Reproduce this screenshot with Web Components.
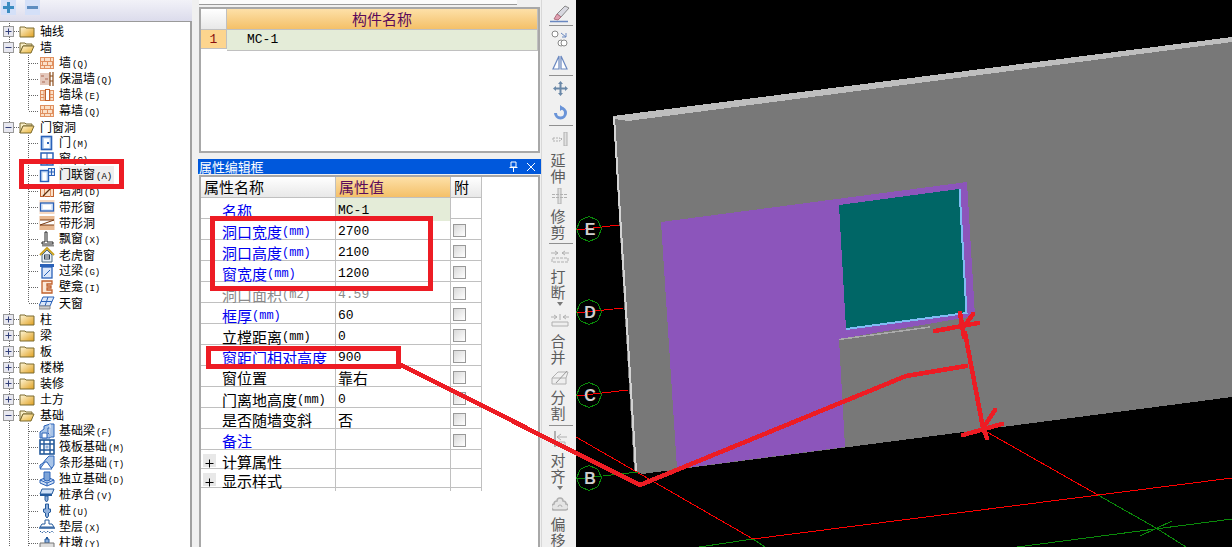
<!DOCTYPE html>
<html lang="zh"><head><meta charset="utf-8"><title>CAD</title>
<style>
html,body{margin:0;padding:0;width:1232px;height:547px;overflow:hidden;background:#f0f0f0}
</style></head><body>
<cad-app></cad-app>
<script>
const CJK='"Noto Sans CJK SC","Noto Sans",sans-serif';
const MONO='"Liberation Mono",monospace';
const B='#2a62b8',BL='#bcd4f4',O='#e09060',OL='#fbe0c8';
const brick=`<rect x="1.500" y="2.500" width="13" height="11" fill="${OL}" stroke="${O}"/><path d="M1 6.500h14M1 10.500h14M5.500 2v4M11.500 2v4M3.500 6v4M8.500 6v4M13.500 6v4M5.500 10v4M11.500 10v4" stroke="${O}" fill="none"/>`;
const ICONS={
brick,
insul:`<rect x="1" y="2" width="10" height="12" fill="#e4c8bc"/><path d="M2 4h3v2H2zM6 7h3v2H6zM3 10h3v2H3z" fill="#c89888"/><path d="M11 1v14M14 1v14M11 5h3M11 10h3" stroke="#8a4a18" fill="none" stroke-width="1.2"/>`,
pier:`<rect x="1.500" y="3.500" width="13" height="10" fill="${OL}" stroke="${O}"/><path d="M5 3v11M11 3v11M1 7.500h4M11 7.500h4M1 10.500h4M11 10.500h4" stroke="${O}"/><rect x="6.500" y="2.500" width="4" height="11" fill="#fff" stroke="#c0602c"/>`,
door:`<rect x="2.500" y="1.500" width="10" height="13" fill="${BL}" stroke="${B}" stroke-width="1.6"/><rect x="5" y="3.500" width="5.500" height="9.500" fill="#fff"/><rect x="8" y="7" width="2" height="2" fill="${B}"/>`,
win:`<rect x="2" y="2" width="12" height="12" fill="#fff" stroke="${B}" stroke-width="1.500"/><path d="M8 2v12M2 8h12" stroke="${B}"/>`,
doorwin:`<rect x="1.500" y="3.500" width="8" height="11" fill="${BL}" stroke="${B}" stroke-width="1.400"/><rect x="3.500" y="5.500" width="4" height="8" fill="#fff"/><rect x="9.500" y="1.500" width="6" height="7" fill="#dce8fa" stroke="${B}"/><path d="M12.500 1.500v7M9.500 5h6" stroke="${B}"/>`,
hole:`<rect x="1.500" y="2.500" width="13" height="11" fill="${OL}" stroke="#c0602c"/><path d="M5.500 2v12M11.500 2v12" stroke="${O}"/><path d="M4 13L13 4" stroke="#5a3010" stroke-width="1.300"/>`,
stripwin:`<rect x="0.500" y="1" width="15" height="14" fill="#f6d8c0"/><rect x="1.500" y="4" width="13" height="8" fill="#dce8fa" stroke="${B}" stroke-width="1.300"/><rect x="4" y="6" width="8" height="4" fill="#fff"/>`,
striphole:`<rect x="0.500" y="1" width="15" height="14" fill="#e8b890"/><rect x="1" y="5" width="14" height="5" fill="#fff"/><path d="M1 10L15 5M1 5h14M1 10h14" stroke="#7a3a10" fill="none"/>`,
bay:`<path d="M6 1h2v10h6v2H3v-2h3z" fill="#fff" stroke="#222"/><path d="M3 14.500h12" stroke="#888" stroke-width="2"/>`,
dormer:`<path d="M1 8L8 1l7 7" fill="none" stroke="#c8a020" stroke-width="2"/><path d="M3 8v7h10V8L8 3z" fill="#e8f0f8" stroke="#4a6a80"/><rect x="5.500" y="8" width="5" height="4" fill="#fff" stroke="#345"/><path d="M5.500 10h5" stroke="#345"/>`,
lintel:`<rect x="1" y="1" width="14" height="3" fill="${B}"/><rect x="3" y="4" width="10" height="11" fill="#dce8fa" stroke="${B}" stroke-width="1.300"/><path d="M5 13L11 7" stroke="${B}"/>`,
niche:`<path d="M3 2h10v3H8v2h4v2H8v2h5v3H3z" fill="#fbe8d8" stroke="#c0602c" stroke-width="1.300"/>`,
skylight:`<path d="M4 2h11l-4 9H0z" fill="#dce8fa" stroke="${B}"/><path d="M9 2L6 11M2 6.500h11" stroke="${B}"/><path d="M0 11h11v3H0z" fill="#ccc" stroke="#888"/>`,
beam:`<path d="M1 15V9l4-3v-3l6-2h4v13h-4V5H9v5l2 2v3z" fill="#a8c4e8" stroke="${B}"/><path d="M11 1v13" stroke="#fff"/><path d="M3 15V10h5v5z" fill="#fff" stroke="${B}"/>`,
raft:`<rect x="1" y="1" width="14" height="14" fill="#fff" stroke="#245a9c" stroke-width="1.600"/><path d="M1 5h14M1 11h14M5 1v14M11 1v14" stroke="#245a9c" stroke-width="1.400"/><rect x="6.500" y="6.500" width="3" height="3" fill="#8fb0dc"/>`,
stripf:`<path d="M1 13V10l3-2 3-4 3-3h5v9l-2 3z" fill="#a8c4e8" stroke="${B}"/><path d="M1 14h12l-3-4-2-3H6L3 11z" fill="#fff" stroke="${B}"/>`,
iso:`<path d="M1 9l7-3 7 3v3l-7 3-7-3z" fill="#cfe0f6" stroke="${B}"/><path d="M5 1h6v8l-3 1-3-1z" fill="#7ea4d8" stroke="${B}"/><path d="M1 9l7 3 7-3M8 12v3" stroke="${B}" fill="none"/>`,
cap:`<path d="M3 2h12l-2 5H1z" fill="#cfe0f6" stroke="#245a9c"/><path d="M1 7h12v2H1z" fill="#245a9c"/><path d="M6 9h3v4l-1.500 2L6 13z" fill="#8fb0dc" stroke="#245a9c"/>`,
pile:`<path d="M6.500 1h3v5h2v3l-2 1v3l-1.500 2L6.500 13v-3l-2-1V6h2z" fill="#8fb0dc" stroke="#245a9c"/>`,
cushion:`<path d="M6 1h4v4h3l2 3H1l2-3h3z" fill="#fff" stroke="#245a9c"/><path d="M0 9h16" stroke="#245a9c" stroke-width="1.500"/><path d="M1 12l2 2 2-2 2 2 2-2 2 2 2-2 2 2" stroke="#245a9c" fill="none" stroke-dasharray="1.500 1"/>`,
pierf:`<path d="M6 4h4v4H6z" fill="#8fb0dc" stroke="#245a9c"/><path d="M7 2h2v2H7z" fill="#245a9c"/><path d="M1 8h14v7H1z" fill="#ddd" stroke="#777"/>`
};

function def(name,cls){customElements.define(name,cls)}
class Base extends HTMLElement{
  render(html){this.attachShadow({mode:'open'}).innerHTML=html}
}

/* ---- tree ---- */
def('tree-row',class extends Base{connectedCallback(){ if(this.shadowRoot)return;
  const a=n=>this.getAttribute(n);const kind=a('kind');
  const dots='stroke="#666" stroke-dasharray="1 1" fill="none"';
  let pre,ic;
  if(kind==='leaf'){
    const last=this.hasAttribute('last');
    pre=`<svg width="39" height="16"><path d="M9.500 0v16" ${dots}/><path d="M28.500 0v${last?8:16}" ${dots}/><path d="M29 8.500h9" ${dots}/></svg>`;
    ic=`<svg class="ic" width="16" height="16" viewBox="0 0 16 16">${ICONS[a('icon')]}</svg>`;
  }else{
    const open=kind==='open';
    pre=`<svg width="19" height="16"><path d="M9.500 0v16" ${dots}/><path d="M14 8.500h5" ${dots}/><rect x="3.500" y="3.500" width="10" height="10" fill="#e8e8f0" stroke="#999"/><path d="M5.500 8.500h6${open?'':'M8.500 5.500v6'}" stroke="#33407a" fill="none"/></svg>`;
    ic=open
     ?`<svg class="fo" width="16" height="16" viewBox="0 0 16 16"><path d="M1 4h5l1 1h6v2H4L1 14z" fill="#f8eec8" stroke="#7a6a30"/><path d="M4 7h11l-3 7H1z" fill="url(#g)" stroke="#7a6a30"/><defs><linearGradient id="g" x1="0" y1="0" x2="1" y2="1"><stop offset="0" stop-color="#fff6d8"/><stop offset="1" stop-color="#e8b030"/></linearGradient></defs></svg>`
     :`<svg class="fo" width="16" height="16" viewBox="0 0 16 16"><path d="M1 4h5l1 1h8v9H1z" fill="url(#g)" stroke="#7a6a30"/><defs><linearGradient id="g" x1="0" y1="0" x2="1" y2="1"><stop offset="0" stop-color="#fff8dc"/><stop offset="1" stop-color="#e0a020"/></linearGradient></defs></svg>`;
  }
  const sel=this.hasAttribute('selected');
  const sfx=a('sfx');
  this.render(`<style>
   :host{display:flex;height:16px;align-items:center;font:12px/16px ${CJK};color:#000;white-space:nowrap}
   svg{display:block;flex:none}
   .fo{margin-right:5px}
   .ic{margin-right:4px}
   .t{padding-right:2px;${sel?'background:#eee;':''}}
   .s{font:9px/16px ${MONO};margin-left:1px}
  </style>${pre}${ic}<span class="t">${a('label')}${sfx?`<span class="s">(${sfx})</span>`:''}</span>`);
}});
const TREE=[
['closed','轴线'],['open','墙'],
['leaf','墙','brick','Q'],['leaf','保温墙','insul','Q'],['leaf','墙垛','pier','E'],['leaf','幕墙','brick','Q',1],
['open','门窗洞'],
['leaf','门','door','M'],['leaf','窗','win','C'],['leaf','门联窗','doorwin','A',0,1],['leaf','墙洞','hole','D'],['leaf','带形窗','stripwin'],['leaf','带形洞','striphole'],['leaf','飘窗','bay','X'],['leaf','老虎窗','dormer'],['leaf','过梁','lintel','G'],['leaf','壁龛','niche','I'],['leaf','天窗','skylight','',1],
['closed','柱'],['closed','梁'],['closed','板'],['closed','楼梯'],['closed','装修'],['closed','土方'],['open','基础'],
['leaf','基础梁','beam','F'],['leaf','筏板基础','raft','M'],['leaf','条形基础','stripf','T'],['leaf','独立基础','iso','D'],['leaf','桩承台','cap','V'],['leaf','桩','pile','U'],['leaf','垫层','cushion','X'],['leaf','柱墩','pierf','Y']
];
def('tree-panel',class extends Base{connectedCallback(){ if(this.shadowRoot)return;
  const rows=TREE.map(r=>`<tree-row kind="${r[0]}" label="${r[1]}"${r[2]?` icon="${r[2]}"`:''}${r[3]?` sfx="${r[3]}"`:''}${r[4]?' last':''}${r[5]?' selected':''}></tree-row>`).join('');
  this.render(`<style>
   :host{display:flex;flex-direction:column;width:192px;height:547px;overflow:hidden;flex:none}
   .bar{height:21px;flex:none;box-sizing:border-box;background:linear-gradient(#f2f2f8,#dcdcec);display:flex;gap:9px;padding-left:1px}
   .b{width:15px;height:15px;background:#d4e0f8;border:0 solid #bcc8ee;box-sizing:border-box;display:flex;align-items:center;justify-content:center}
   .tree{flex:1;background:#fff;border-top:1px solid #9a9a9a;border-right:2px solid #a0a0a0;padding-top:1px;overflow:hidden}
  </style><div class="bar">
   <div class="b"><svg width="11" height="11"><path d="M0 5.500h11M5.500 0v11" stroke="#3c8cc0" stroke-width="3"/></svg></div>
   <div class="b"><svg width="11" height="5"><path d="M0 2.500h11" stroke="#5c8cc0" stroke-width="3"/></svg></div>
  </div><div class="tree">${rows}</div>`);
}});

/* ---- component list ---- */
def('component-list',class extends Base{connectedCallback(){ if(this.shadowRoot)return;
  this.render(`<style>
   :host{display:block;height:146px;box-sizing:border-box;margin:2px 1px 0;border:2px solid #a8a8a8;background:#fff;overflow:hidden}
   .r{display:grid;grid-template-columns:26px 1fr}
   .r>div{box-sizing:border-box;border-bottom:1px solid #c0c0c0;border-right:1px solid #c0c0c0}
   .h{height:21px;font:15px/19px ${CJK};color:#5a0a5a;text-align:center;background:linear-gradient(#fde0a8,#f4c068)}
   .e{background:linear-gradient(#fff,#e8e8e8)}
   .n{height:19px;background:#fdd58e;font:13px/20px ${MONO};color:#8a1010;text-align:center}
   .d{background:#e4ecd8;font:13px/20px ${MONO};color:#000;padding-left:20px}
  </style>
  <div class="r"><div class="h e"></div><div class="h">构件名称</div></div>
  <div class="r"><div class="n">1</div><div class="d">MC-1</div></div>`);
}});

/* ---- property row ---- */
def('prop-row',class extends Base{connectedCallback(){ if(this.shadowRoot)return;
  const a=n=>this.getAttribute(n)||'';
  const c=a('tone');const col=c==='blue'?'#0000f0':c==='grey'?'#8a8a8a':'#000';
  const valCjk=/[^\x00-\x7f]/.test(a('value'));
  const h=a('h')||21;
  const chk=this.hasAttribute('check')?'<i class="c"></i>':'';
  const plus=this.hasAttribute('expand')?'<b class="p"><svg width="13" height="13"><path d="M2.500 6.500h8M6.500 2.500v8" stroke="#000"/></svg></b>':'';
  const vstyle=this.hasAttribute('current')?'background:#e4ecd8;':'';
  this.render(`<style>
   :host{display:grid;grid-template-columns:135px 115px 31px;width:281px;height:${h}px;box-sizing:border-box;border-bottom:1px solid #c0c0c0}
   div{box-sizing:border-box;border-right:1px solid #c0c0c0;display:flex;align-items:center;min-width:0;white-space:nowrap}
   .n{padding:2px 0 0 21px;font:15px/20px ${CJK};color:${col};position:relative}
   .u{font:12px/20px ${MONO};color:${col}}
   .v{padding:${valCjk?2:3}px 0 0 2px;color:${c==='grey'?'#8a8a8a':'#000'};font:${valCjk?`15px/20px ${CJK}`:`13px/20px ${MONO}`};${vstyle}}
   .x{padding-left:2px}
   .c{display:block;width:13px;height:13px;box-sizing:border-box;border:1px solid #999;background:linear-gradient(135deg,#d8d8d8,#fff)}
   .p{position:absolute;left:2px;top:50%;margin-top:-7px;width:13px;height:13px;background:#e8e8e8;border:0}
  </style><div class="n">${plus}<span>${a('name')}</span><span class="u">${a('unit')}</span></div><div class="v">${a('value')}</div><div class="x">${chk}</div>`);
}});

/* ---- property panel ---- */
def('prop-panel',class extends Base{connectedCallback(){ if(this.shadowRoot)return;
  const R=[
   ['名称','', 'MC-1','blue',0,1],
   ['洞口宽度','(mm)','2700','blue',1],['洞口高度','(mm)','2100','blue',1],['窗宽度','(mm)','1200','blue',1],
   ['洞口面积','(m2)','4.59','grey',1],['框厚','(mm)','60','blue',1],['立樘距离','(mm)','0','',1],
   ['窗距门相对高度','','900','blue',1],['窗位置','','靠右','',1],['门离地高度','(mm)','0','',1],['是否随墙变斜','','否','',1],['备注','','','blue',1]
  ].map(r=>`<prop-row name="${r[0]}" unit="${r[1]}" value="${r[2]}" tone="${r[3]}"${r[4]?' check':''}${r[5]?' current':''}></prop-row>`).join('');
  this.render(`<style>
   :host{display:flex;flex-direction:column;flex:1;min-height:0;margin-top:6px}
   .title{height:15px;flex:none;background:#0058dc;color:#fff;font:13px/15px ${CJK};display:flex;align-items:center;padding-left:1px;letter-spacing:-.1px}
   .title span{flex:1}
   .title svg{display:block;margin-right:7px}
   .box{flex:1;margin:1px 1px 0;box-sizing:border-box;border:2px solid #a8a8a8;border-bottom:0;background:#fff;overflow:hidden}
   .hd{display:grid;grid-template-columns:135px 115px 31px;width:281px;height:21px;box-sizing:border-box;border-bottom:1px solid #c0c0c0;font:15px/19px ${CJK}}
   .hd div{box-sizing:border-box;border-right:1px solid #c0c0c0;padding-left:3px;background:linear-gradient(#fff,#e8e8e8)}
   .hd .o{background:linear-gradient(#fde0a8,#f4c068);color:#5a0a5a}
  </style>
  <div class="title"><span>属性编辑框</span>
   <svg width="11" height="11" viewBox="0 0 11 11"><path d="M3 1h5v5H3zM1.500 6.500h8M5.500 6.500V11" stroke="#fff" fill="none"/></svg>
   <svg width="10" height="10" style="margin-right:5px" viewBox="0 0 10 10"><path d="M1 1l8 8M9 1l-8 8" stroke="#fff"/></svg></div>
  <div class="box">
   <div class="hd"><div>属性名称</div><div class="o">属性值</div><div>附</div></div>
   ${R}
   <prop-row name="计算属性" h="19" expand></prop-row>
   <prop-row name="显示样式" h="19" expand></prop-row>
  </div>`);
}});

/* ---- tool strip ---- */
def('tool-btn',class extends Base{connectedCallback(){ if(this.shadowRoot)return;
  const ih=this.getAttribute('ih')||24, h=this.getAttribute('h');
  this.render(`<style>
   :host{display:flex;flex-direction:column;align-items:center;${h?`height:${h}px;`:''}flex:none}
   .i{height:${ih}px;display:flex;align-items:center;justify-content:center;flex:none}
   .t{width:16px;margin-left:-4px;font:15px/16px ${CJK};color:#5c5c5c;word-break:break-all;text-align:center}
   .a{font-size:0;width:0;height:0;border:3px solid transparent;border-top:4px solid #777;margin-top:2px}
  </style><div class="i"><slot name="i"></slot></div><div class="t"><slot></slot></div>${this.hasAttribute('arrow')?'<div class="a"></div>':''}`);
}});
def('tool-strip',class extends Base{connectedCallback(){ if(this.shadowRoot)return;
  const G='#b0b0b0',Bl='#6a88c0';
  const ico=(w,h,b)=>`<svg slot="i" width="${w}" height="${h}" viewBox="0 0 ${w} ${h}">${b}</svg>`;
  const sep='<hr>';
  this.render(`<style>
   :host{display:flex;flex-direction:column;width:35px;height:547px;flex:none;box-sizing:border-box;background:#f0f0f0;border-left:1px solid #d8d8d8;padding-left:2px;overflow:hidden}
   hr{margin:0 0 0 5px;width:24px;height:1px;border:0;background:#909090;flex:none}
  </style>
  <tool-btn h="25" ih="28">${ico(22,18,`<path d="M16 1l4 2-8 9-4-3z" fill="#d8d8e0" stroke="#888"/><path d="M8 9l4 3-3 3-4-1z" fill="#e0a0b0" stroke="#b07080"/><path d="M1 16.500h18" stroke="${Bl}" stroke-width="1.500"/>`)}</tool-btn>${sep}
  <tool-btn h="24" ih="26">${ico(18,18,`<circle cx="4" cy="4" r="3" fill="#fff" stroke="#888"/><circle cx="10" cy="13" r="3" fill="#fff" stroke="#888"/><circle cx="13" cy="13" r="3" fill="#fff" stroke="#888"/><path d="M10 3l5 4M15 3v4h-4" stroke="${Bl}" fill="none"/>`)}</tool-btn>
  <tool-btn h="25" ih="24">${ico(16,15,`<path d="M7 1L1 14h6zM9 1l6 13H9z" fill="#fff" stroke="${Bl}" stroke-width="1.200"/>`)}</tool-btn>${sep}
  <tool-btn h="24" ih="24">${ico(15,15,`<path d="M7.500 0l2.500 3H8.500v3.500H12V5l3 2.500-3 2.500V8.500H8.500V12H10l-2.500 3L5 12h1.500V8.500H3V10L0 7.500 3 5v1.500h3.500V3H5z" fill="#6a88a8"/>`)}</tool-btn>
  <tool-btn h="25" ih="24">${ico(15,15,`<path d="M7.500 3a5 5 0 1 1-5 5" fill="none" stroke="#6a94d8" stroke-width="3"/><path d="M7 0l4 3-4 3z" fill="#6a94d8"/>`)}</tool-btn>${sep}
  <tool-btn h="58" ih="26">${ico(16,14,`<path d="M1 6h7v3H1zM9.500 6v3" stroke="${G}" fill="none" stroke-dasharray="2 1"/><path d="M12 0h3v14h-3z" fill="#e0e0e0" stroke="${G}"/>`)}延伸</tool-btn>
  <tool-btn h="59" ih="24">${ico(16,16,`<path d="M6 0h3v16H6z" fill="#e0e0e0" stroke="${G}"/><path d="M0 6.500h15M0 9.500h15" stroke="${G}" stroke-dasharray="3 1"/>`)}修剪</tool-btn>${sep}
  <tool-btn h="64" ih="24" arrow>${ico(18,13,`<path d="M0 3h7M11 3h7M4 1l3 2-3 2M14 1l-3 2 3 2" stroke="${G}" fill="none"/><path d="M1 8h16v4H1z" fill="#eee" stroke="${G}" stroke-dasharray="3 1"/>`)}打断</tool-btn>
  <tool-btn h="57" ih="25">${ico(18,13,`<path d="M0 3h6M12 3h6M3 1l3 2-3 2M15 1l-3 2 3 2M9 0v6" stroke="${G}" fill="none"/><path d="M1 8h16v4H1z" fill="#eee" stroke="${G}"/>`)}合并</tool-btn>
  <tool-btn h="60" ih="24">${ico(18,16,`<path d="M1 9h14v6H1z" fill="#eee" stroke="${G}"/><path d="M1 9l6-6h10l-2 6" fill="none" stroke="${G}"/><path d="M5 14L16 2" stroke="#999"/>`)}分割</tool-btn>${sep}
  <tool-btn h="65" ih="26" arrow>${ico(15,16,`<path d="M2 0v16" stroke="${G}" stroke-width="2"/><path d="M4 6h10M8 3L4 6l4 3" stroke="${G}" fill="none"/><path d="M4 11h8v4H4z" fill="#eee" stroke="${G}"/>`)}对齐</tool-btn>
  <tool-btn h="56" ih="25">${ico(16,14,`<path d="M3 13a3 3 0 0 1-1-6 3 3 0 0 1 3-3 3 3 0 0 1 6 0 3 3 0 0 1 3 3 3 3 0 0 1-1 6z" fill="#e4e4e4" stroke="${G}" stroke-width="1.500"/><path d="M6 10a2 2 0 0 1 4 0" fill="none" stroke="${G}"/>`)}偏移</tool-btn>`);
}});

/* ---- 3d view ---- */
def('cad-view',class extends Base{connectedCallback(){ if(this.shadowRoot)return;
  const ax=(l,cy,col,x2,y2)=>`<path d="M576 ${cy+1}L${x2} ${y2}" stroke="${col}"/>
   <polygon points="${[0,45,90,135,180,225,270,315].map(d=>{const r=d*Math.PI/180;return (589+12.5*Math.cos(r)).toFixed(1)+','+(cy+12.5*Math.sin(r)).toFixed(1)}).join(' ')}" fill="none" stroke="#0a8a0a"/>
   <text x="590" y="${cy+6}" text-anchor="middle" font-family="Liberation Sans" font-size="16" font-weight="bold" fill="#cfcfcf" stroke="none">${l}</text>`;
  this.render(`<style>
   :host{display:block;flex:1;min-width:0;height:547px;background:#000;overflow:hidden}
   svg{display:block}
  </style><svg width="656" height="547" viewBox="576 0 656 547">
   <g shape-rendering="crispEdges" fill="none" stroke-width="1">
    <path d="M576 437L753 539" stroke="#f00"/>
    <path d="M753 539L765 547" stroke="#0a8a0a"/>
    <path d="M753 539L1232 478" stroke="#f00"/>
    <path d="M699 547L753 539" stroke="#0a8a0a"/>
    <path d="M987 432L1098 495" stroke="#f00"/>
   </g>
   <g shape-rendering="crispEdges">
    <polygon points="613,116 1232,37 1232,397 642,474 634,470" fill="#787878"/>
    <polygon points="613,116 1232,37 1232,42 628,121 614,119" fill="#bebebe"/>
    <path d="M614 117L636 471" stroke="#d4d4d4" stroke-width="2" fill="none"/>
    <polygon points="661,222 967,182 975,316 839,339 845,447 677,469" fill="#8c55bb"/>
    <polygon points="839,205 959,189 966,313 846,329" fill="#006666"/>
    <path d="M959.500 189L966.500 313L846 329" stroke="#7fbcf4" stroke-width="2" fill="none"/>
    <path d="M839 339.500L930 327" stroke="#aaa" stroke-width="1.500" fill="none"/>
   </g>
   <g fill="none" shape-rendering="crispEdges">
    ${ax('E',229,'#f00',619,225)}${ax('D',312,'#f00',623,308)}${ax('C',395,'#f00',628,390)}${ax('B',478,'#0a8a0a',638,472)}
    <path d="M1098 495L1156 528L1186 547M1017 547L1232 519M1140 536L1172 521" stroke="#0a8a0a"/>
   </g>
  </svg>`);
}});

/* ---- annotation layer ---- */
def('annot-layer',class extends Base{connectedCallback(){ if(this.shadowRoot)return;
  this.render(`<style>:host{position:absolute;left:0;top:0;width:1232px;height:547px;pointer-events:none}svg{display:block}</style>
  <svg width="1232" height="547" fill="none" stroke="#ed1c24" shape-rendering="crispEdges">
   <rect x="21.500" y="161.500" width="100" height="25" stroke-width="5"/>
   <rect x="212.500" y="218.500" width="218" height="70" stroke-width="5"/>
   <rect x="208.500" y="348.500" width="190" height="18" stroke-width="5"/>
   <g stroke-width="4.500" stroke-linecap="round" stroke-linejoin="miter">
    <path d="M401 365L640 485L906 376L966 366"/>
    <path d="M935 331L978 323M960 313L964 337M973 314L963 328M965 333L983 428M963 435L1002 424M995 410L983 428L987 438"/>
   </g>
  </svg>`);
}});

/* ---- app ---- */
def('mid-column',class extends Base{connectedCallback(){ if(this.shadowRoot)return;
  this.render(`<style>
   :host{display:flex;flex-direction:column;width:343px;height:547px;flex:none;margin-left:6px}
   .strip{height:5px;flex:none;margin:0 24px 0 1px;background:#fbfbfb;border-bottom:1px solid #9a9a9a;box-sizing:border-box}
  </style><div class="strip"></div><slot></slot>`);
}});
def('cad-app',class extends Base{connectedCallback(){ if(this.shadowRoot)return;
  this.render(`<style>
   :host{display:flex;position:relative;width:1232px;height:547px;overflow:hidden;background:#f0f0f0}
  </style>
  <tree-panel></tree-panel>
  <mid-column><component-list></component-list><prop-panel></prop-panel></mid-column>
  <tool-strip></tool-strip>
  <cad-view></cad-view>
  <annot-layer></annot-layer>`);
}});
</script>
</body></html>
